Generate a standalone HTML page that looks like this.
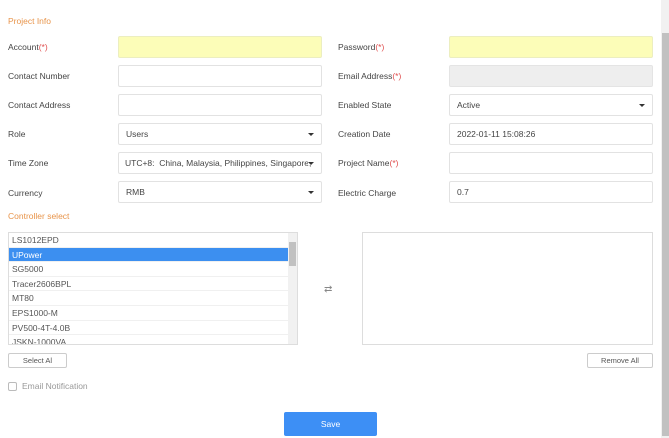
<!DOCTYPE html>
<html><head><style>
*{box-sizing:border-box;margin:0;padding:0}
body{width:669px;height:438px;overflow:hidden;background:#fff;font-family:"Liberation Sans",sans-serif;font-size:8.5px;color:#444;position:relative}
.a{position:absolute}
.lbl{position:absolute;line-height:12px}
.req{color:#e05050}
.inp{position:absolute;height:22px;border:1px solid #e2e2e2;border-radius:2px;background:#fff;padding-left:7px;line-height:20px;color:#444}
.y{background:#fcfdb8;border-color:#eceec0}
.g{background:#eee;border-color:#e4e4e4}
.car{position:absolute;right:7px;top:9px;border-left:3px solid transparent;border-right:3px solid transparent;border-top:3px solid #333}
.sec{position:absolute;color:#e8944a;left:8px}
.row{height:14.6px;line-height:14.6px;padding-left:3px;border-bottom:1px solid #f0f0f0;color:#555;font-size:8.5px}
.btn{position:absolute;height:15px;border:1px solid #ccc;border-radius:2px;text-align:center;line-height:13px;font-size:7.5px;color:#555;background:#fff}
</style></head><body>
<div class="sec" style="top:16px">Project Info</div>

<div class="lbl" style="left:8px;top:41px">Account<span class="req">(*)</span></div>
<div class="inp y" style="left:118px;top:36px;width:204px"></div>
<div class="lbl" style="left:338px;top:41px">Password<span class="req">(*)</span></div>
<div class="inp y" style="left:449px;top:36px;width:204px"></div>

<div class="lbl" style="left:8px;top:70px">Contact Number</div>
<div class="inp" style="left:118px;top:65px;width:204px"></div>
<div class="lbl" style="left:338px;top:70px">Email Address<span class="req">(*)</span></div>
<div class="inp g" style="left:449px;top:65px;width:204px"></div>

<div class="lbl" style="left:8px;top:99px">Contact Address</div>
<div class="inp" style="left:118px;top:94px;width:204px"></div>
<div class="lbl" style="left:338px;top:99px">Enabled State</div>
<div class="inp" style="left:449px;top:94px;width:204px">Active<span class="car"></span></div>

<div class="lbl" style="left:8px;top:128px">Role</div>
<div class="inp" style="left:118px;top:123px;width:204px">Users<span class="car"></span></div>
<div class="lbl" style="left:338px;top:128px">Creation Date</div>
<div class="inp" style="left:449px;top:123px;width:204px">2022-01-11 15:08:26</div>

<div class="lbl" style="left:8px;top:157px">Time Zone</div>
<div class="inp" style="left:118px;top:152px;width:204px;white-space:nowrap;overflow:hidden;padding-left:6px">UTC+8:&nbsp; China, Malaysia, Philippines, Singapore,<span class="car" style="background:#fff"></span></div>
<div class="lbl" style="left:338px;top:157px">Project Name<span class="req">(*)</span></div>
<div class="inp" style="left:449px;top:152px;width:204px"></div>

<div class="lbl" style="left:8px;top:187px">Currency</div>
<div class="inp" style="left:118px;top:181px;width:204px">RMB<span class="car"></span></div>
<div class="lbl" style="left:338px;top:187px">Electric Charge</div>
<div class="inp" style="left:449px;top:181px;width:204px">0.7</div>

<div class="sec" style="top:211px">Controller select</div>

<div class="a" style="left:8px;top:232px;width:290px;height:113px;border:1px solid #ddd;overflow:hidden">
 <div class="row">LS1012EPD</div>
 <div class="row" style="background:#3c8ff0;color:#fff">UPower</div>
 <div class="row">SG5000</div>
 <div class="row">Tracer2606BPL</div>
 <div class="row">MT80</div>
 <div class="row">EPS1000-M</div>
 <div class="row">PV500-4T-4.0B</div>
 <div class="row">JSKN-1000VA</div>
 <div class="a" style="right:0;top:0;width:9px;height:111px;background:#f1f1f1"></div>
 <div class="a" style="right:1px;top:9px;width:7px;height:24px;background:#c1c1c1"></div>
</div>
<div class="a" style="left:324px;top:284px;color:#888;font-size:10px">⇄</div>
<div class="a" style="left:362px;top:232px;width:291px;height:113px;border:1px solid #ddd"></div>

<div class="btn" style="left:8px;top:353px;width:59px">Select Al</div>
<div class="btn" style="left:587px;top:353px;width:66px">Remove All</div>

<div class="a" style="left:8px;top:382px;width:9px;height:9px;border:1px solid #bbb;border-radius:2px"></div>
<div class="a" style="left:22px;top:381px;color:#999">Email Notification</div>

<div class="a" style="left:284px;top:412px;width:93px;height:24px;background:#3d8ff5;border-radius:2px;color:#fff;text-align:center;line-height:24px">Save</div>

<div class="a" style="left:661px;top:0;width:8px;height:438px;background:#f1f1f1"></div>
<div class="a" style="left:662px;top:33px;width:7px;height:403px;background:#c1c1c1"></div>
</body></html>
